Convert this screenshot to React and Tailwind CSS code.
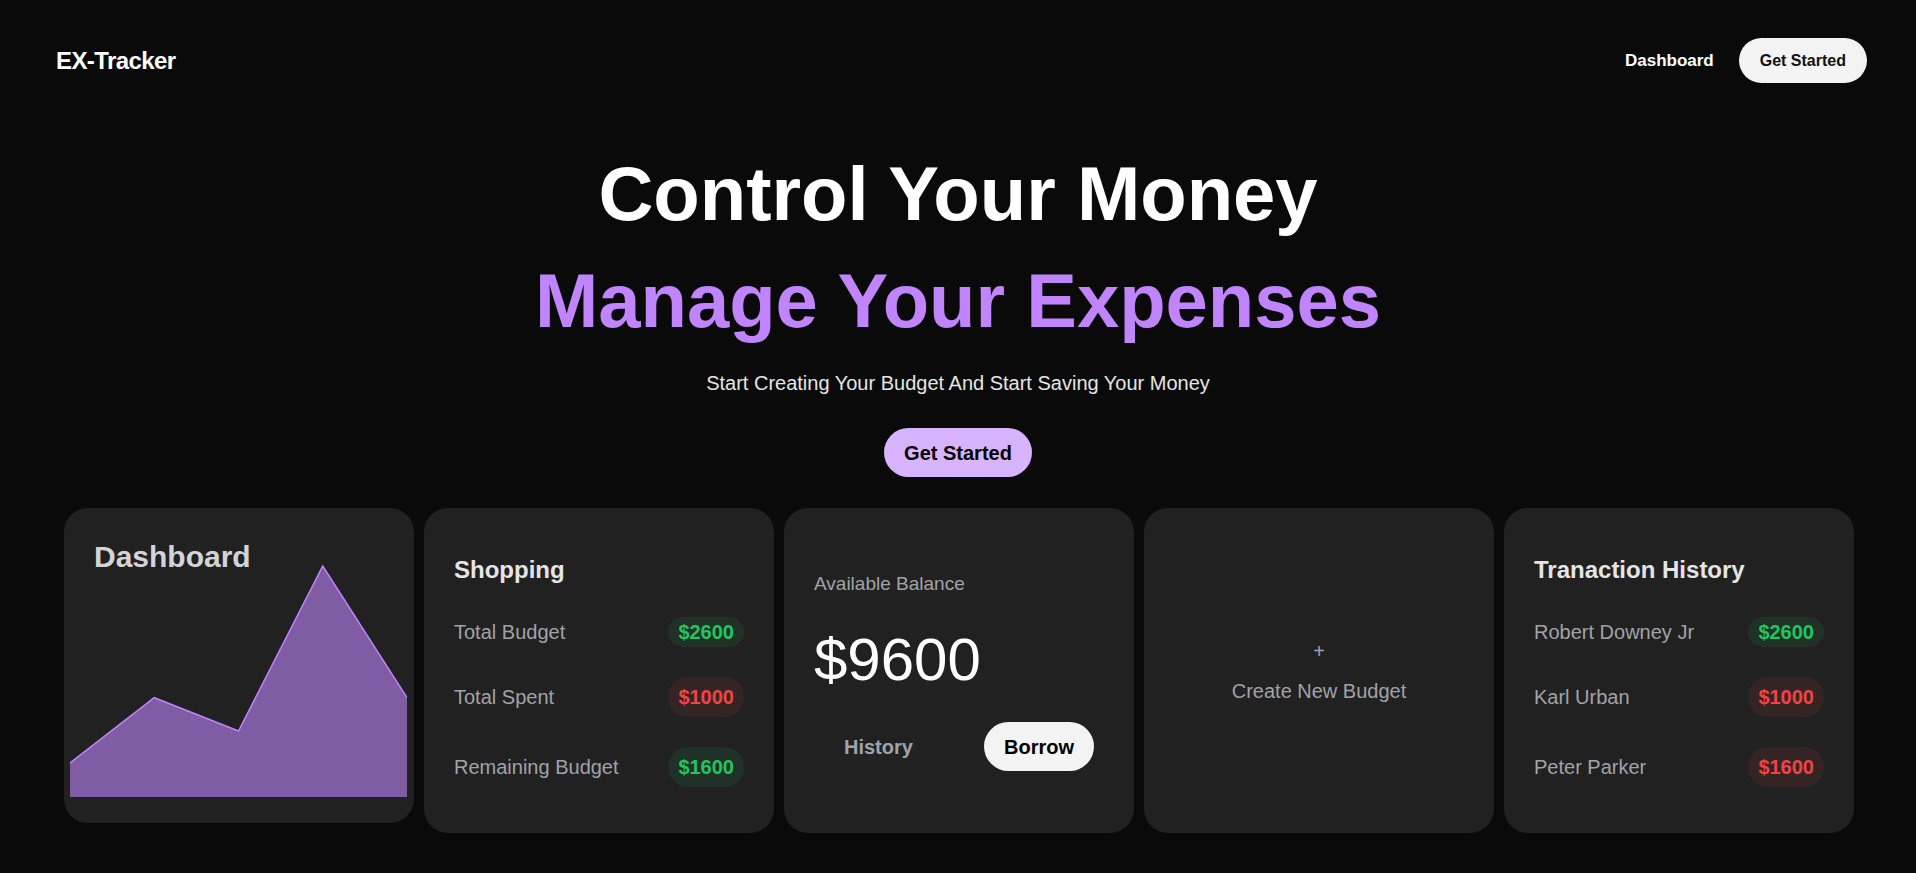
import React from 'react'

const SHOPPING = [
  { label: 'Total Budget', amount: '$2600', tone: 'green', slim: true },
  { label: 'Total Spent', amount: '$1000', tone: 'red' },
  { label: 'Remaining Budget', amount: '$1600', tone: 'green' },
]

const HISTORY = [
  { label: 'Robert Downey Jr', amount: '$2600', tone: 'green', slim: true },
  { label: 'Karl Urban', amount: '$1000', tone: 'red' },
  { label: 'Peter Parker', amount: '$1600', tone: 'red' },
]

function Badge({ amount, tone, slim }) {
  const color = tone === 'green'
    ? 'bg-[#22c55e]/10 text-[#22c55e]'
    : 'bg-[#ef4444]/10 text-[#ef4444]'
  return (
    <span className={`rounded-full px-[10px] text-xl font-bold leading-7 ${slim ? 'py-px' : 'py-[6px]'} ${color}`}>
      {amount}
    </span>
  )
}

function ListCard({ title, rows }) {
  return (
    <div className="flex h-[325px] flex-col justify-center rounded-3xl bg-[#212121] px-[30px]">
      <h3 className="mb-[31px] text-2xl font-bold leading-8 text-neutral-200">{title}</h3>
      <div className="flex flex-col gap-[30px]">
        {rows.map((r) => (
          <div key={r.label} className="flex items-center justify-between">
            <span className="text-xl leading-7 text-[#a1a1aa]">{r.label}</span>
            <Badge {...r} />
          </div>
        ))}
      </div>
    </div>
  )
}

function ChartCard() {
  // area chart, points picked by eye
  const pts = [[0, 202], [84.25, 136.7], [168.5, 170], [252.75, 5], [337, 136.7]]
  const line = pts.map(([x, y], i) => `${i ? 'L' : 'M'}${x},${y}`).join(' ')
  return (
    <div className="flex flex-col rounded-3xl bg-[#212121] pt-[31px] pb-[26px]">
      <h3 className="pl-[30px] text-3xl font-bold leading-9 text-[#d4d4d8]">Dashboard</h3>
      <svg className="ml-[6px] -mt-[14px]" width="337" height="236" viewBox="0 0 337 236">
        <path d={`${line} L337,236 L0,236 Z`} fill="#c084fc" fillOpacity="0.6" />
        <path d={line} fill="none" stroke="#c084fc" strokeWidth="1.5" />
      </svg>
    </div>
  )
}

function BalanceCard() {
  return (
    <div className="flex h-[325px] flex-col justify-center gap-8 rounded-3xl bg-[#212121] px-[30px]">
      <p className="text-[19px] leading-7 text-[#a1a1aa]">Available Balance</p>
      <p className="text-6xl leading-none text-white">$9600</p>
      <div className="flex items-center justify-between px-[10px]">
        <button className="flex h-[49px] items-center px-5 text-xl font-bold text-[#a1a1aa]">History</button>
        <button className="flex h-[49px] items-center rounded-full bg-[#f3f3f3] px-5 text-xl font-bold text-black">Borrow</button>
      </div>
    </div>
  )
}

function CreateCard() {
  return (
    <div className="flex h-[325px] flex-col items-center justify-center gap-3 rounded-3xl bg-[#212121] text-xl leading-7 text-[#a1a1aa]">
      <span>+</span>
      <span>Create New Budget</span>
    </div>
  )
}

export default function App() {
  return (
    <div className="min-h-screen bg-[#0a0a0a] font-['Liberation_Sans',Arial,sans-serif]">
      {/* Nav */}
      <nav className="flex items-center justify-between pt-[38px] pl-14 pr-[49px]">
        <span className="text-2xl font-bold tracking-tight text-white">EX-Tracker</span>
        <div className="flex items-center gap-[25px]">
          <a className="text-[17px] font-bold text-white">Dashboard</a>
          <button className="flex h-[45px] items-center rounded-full bg-[#f3f3f3] px-[21px] text-base font-bold text-[#111]">
            Get Started
          </button>
        </div>
      </nav>

      {/* Hero */}
      <section className="mt-[57px] flex flex-col items-center">
        <h1 className="text-[76px] font-bold leading-[107px] text-white">Control Your Money</h1>
        <h2 className="text-[76px] font-bold leading-[107px] text-[#c084fc]">Manage Your Expenses</h2>
        <p className="mt-[15px] text-xl leading-7 text-[#e5e5e5]">Start Creating Your Budget And Start Saving Your Money</p>
        <button className="mt-[31px] flex h-[49px] items-center rounded-full bg-[#d8b4fe] px-5 text-xl font-bold text-black">
          Get Started
        </button>
      </section>

      {/* Cards */}
      <section className="mt-[31px] grid grid-cols-5 items-start gap-[10px] pl-16 pr-[62px]">
        <ChartCard />
        <ListCard title="Shopping" rows={SHOPPING} />
        <BalanceCard />
        <CreateCard />
        <ListCard title="Tranaction History" rows={HISTORY} />
      </section>
    </div>
  )
}
